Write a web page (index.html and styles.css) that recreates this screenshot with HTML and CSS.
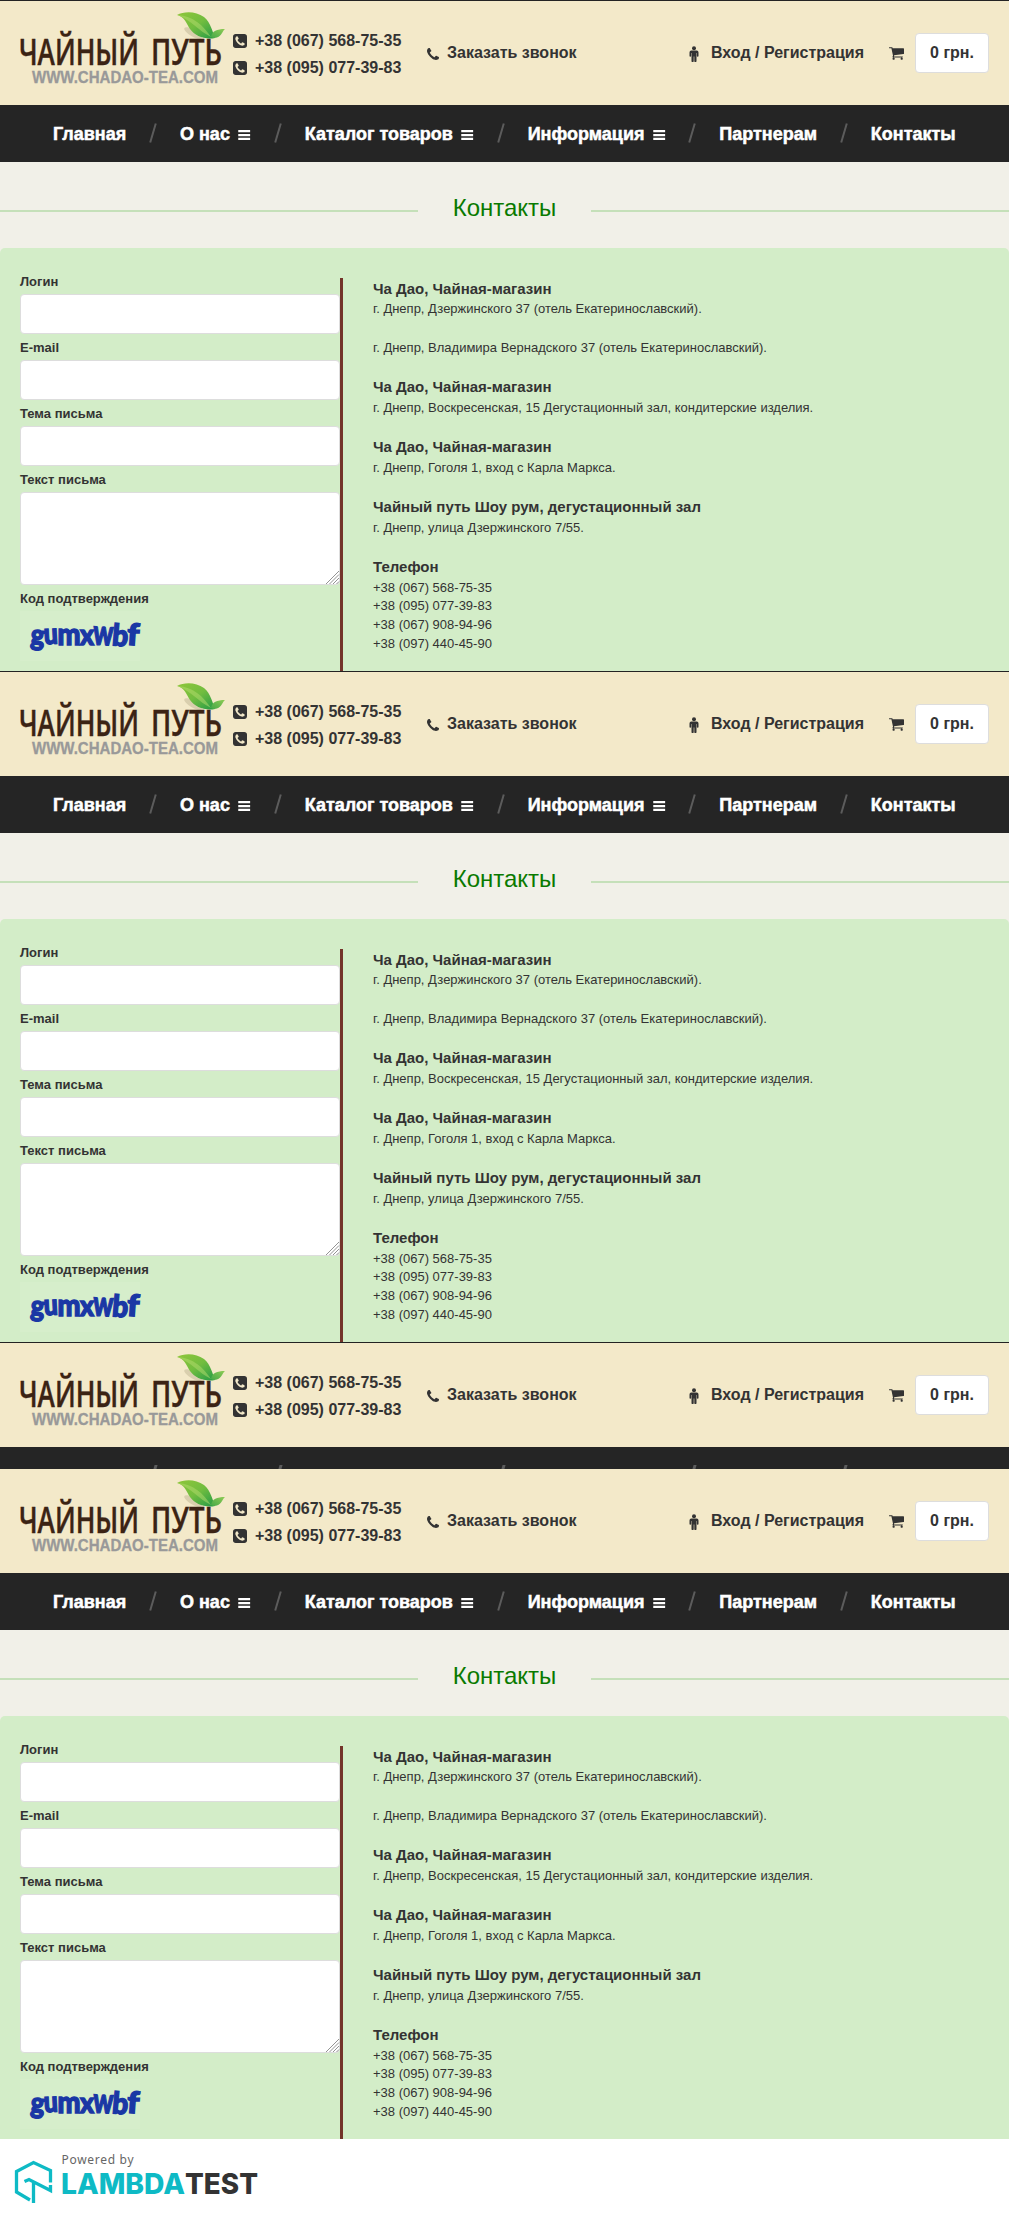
FILE: index.html
```html
<!DOCTYPE html>
<html lang="ru">
<head>
<meta charset="utf-8">
<title>Контакты</title>
<link rel="stylesheet" href="styles.css">
</head>
<body>
<svg class="sprite" width="0" height="0">
  <symbol id="phone-square" viewBox="0 128 1536 1536"><path d="M1280 1193q0-11-2-16-3-8-38.500-29.500t-88.500-49.500l-53-29q-5-3-19-13t-25-15-21-5q-18 0-47 32.500t-57 65.500-44 33q-7 0-16.500-3.500t-15.500-6.500-17-9.500-14-8.500q-99-55-170-126.500t-127-170.500q-2-3-8.500-14t-9.500-17-6.500-15.500-3.500-16.500q0-13 20.500-33.500t45-38.500 45-39.500 20.500-36.500q0-10-5-21t-15-25-13-19q-3-6-15-28.500t-25-45.500-26.500-47.500-25-40.500-16.500-18-16-2q-48 0-101 22-46 21-80 94.500t-34 130.500q0 16 2.500 34t5 30.500 9 33 10 29.500 12.500 33 11 30q60 164 216.500 320.500t320.500 216.500q6 2 30 11t33 12.500 29.500 10 33 9 30.500 5 34 2.500q57 0 130.500-34t94.500-80q22-53 22-101zm256-777v960q0 119-84.500 203.500t-203.500 84.500h-960q-119 0-203.500-84.500t-84.500-203.500v-960q0-119 84.500-203.500t203.500-84.500h960q119 0 203.500 84.500t84.500 203.500z"/></symbol>
  <symbol id="phone" viewBox="192 128 1408 1408"><path d="M1600 1240q0 27-10 70.500t-21 68.500q-21 50-122 106-94 51-186 51-27 0-53-3.500t-57.500-12.500-47-14.500-55.500-20.500-49-18q-98-35-175-83-127-79-264-216t-216-264q-48-77-83-175-3-9-18-49t-20.500-55.500-14.500-47-12.500-57.500-3.500-53q0-92 51-186 56-101 106-122 25-11 68.500-21t70.500-10q14 0 21 3 18 6 53 76 11 19 30 54t35 63.500 31 53.500q3 4 17.500 25t21.500 35.500 7 28.500q0 20-28.500 50t-62 55-62 53-28.500 46q0 9 5 22.500t8.500 20.500 14 24 11.500 19q76 137 174 235t235 174q2 1 19 11.500t24 14 20.500 8.500 22.500 5q18 0 46-28.500t53-62 55-62 50-28.500q14 0 28.500 7t35.500 21.500 25 17.500q25 15 53.500 31t63.500 35 54 30q70 35 76 53 3 7 3 21z"/></symbol>
  <symbol id="cart" viewBox="64 256 1664 1408"><path d="M704 1536q0 52-38 90t-90 38-90-38-38-90 38-90 90-38 90 38 38 90zm896 0q0 52-38 90t-90 38-90-38-38-90 38-90 90-38 90 38 38 90zm128-1088v512q0 24-16.500 42.500t-40.500 21.500l-1044 122q13 60 13 70 0 16-24 64h920q26 0 45 19t19 45-19 45-45 19h-1024q-26 0-45-19t-19-45q0-11 8-31.500t16-36 21.500-40 15.500-29.500l-177-823h-204q-26 0-45-19t-19-45 19-45 45-19h256q16 0 28.500 6.500t19.500 15.500 13 24.500 8 26 5.500 29.500 4.500 26h1201q26 0 45 19t19 45z"/></symbol>
  <symbol id="male" viewBox="0 0 10 16"><circle cx="5" cy="2.200" r="2"/><path d="M2.300 4.600h5.400Q9.500 4.600 9.500 6.400V10a.8.8 0 0 1-1.600 0V7h-.4v8a1 1 0 0 1-2.200 0V10.500h-.6V15a1 1 0 0 1-2.200 0V7h-.4v3a.8.8 0 0 1-1.600 0V6.400Q.5 4.600 2.300 4.600z"/></symbol>
  <symbol id="bars" viewBox="0 0 12 10"><path d="M0 0h12v2.300H0zM0 3.900h12v2.300H0zM0 7.700h12v2.300H0z"/></symbol>
  <symbol id="slash" viewBox="0 0 8 20"><path d="M6.800.5 1.200 19.500" stroke="#5c5c5c" stroke-width="2"/></symbol>
  <linearGradient id="leaf-big" x1="0" y1="0" x2="1" y2="1"><stop offset="0" stop-color="#8fc63a"/><stop offset=".5" stop-color="#72bd3f"/><stop offset="1" stop-color="#239a46"/></linearGradient>
  <linearGradient id="leaf-small" x1="0" y1="1" x2="1" y2="0"><stop offset="0" stop-color="#45a848"/><stop offset="1" stop-color="#8fcc55"/></linearGradient>
</svg>

<template id="header">
  <header class="header">
    <svg class="logo" width="206" height="76" viewBox="20 10 206 76">
      <ellipse cx="193" cy="33" rx="10" ry="3.500" transform="rotate(30 193 33)" fill="#d9cfae"/>
      <path d="M177 15C184 11 196 11 204 17C211 23 212 31 215 38C205 40 195 36 190 29C186 23 185 17 177 15Z" fill="url(#leaf-big)"/>
      <path d="M178 15C193 16 203 25 211 37C199 31 192 21 178 15Z" fill="#b3db6d" opacity=".5"/>
      <path d="M211 37C212 31 217 29 225 29C222 31 222 38 213 38Z" fill="url(#leaf-small)"/>
      <g class="logo-name">
        <text x="19" y="65" textLength="120" lengthAdjust="spacingAndGlyphs">ЧАЙНЫЙ</text>
        <text x="151" y="65" textLength="71" lengthAdjust="spacingAndGlyphs">ПУТЬ</text>
      </g>
      <text class="logo-site" x="32" y="83" textLength="186" lengthAdjust="spacingAndGlyphs">WWW.CHADAO-TEA.COM</text>
    </svg>
    <div class="phones">
      <div class="phone"><svg width="14" height="14"><use href="#phone-square"/></svg>+38 (067) 568-75-35</div>
      <div class="phone"><svg width="14" height="14"><use href="#phone-square"/></svg>+38 (095) 077-39-83</div>
    </div>
    <a class="call"><svg width="12" height="12"><use href="#phone"/></svg>Заказать звонок</a>
    <a class="login"><svg width="10" height="16"><use href="#male"/></svg>Вход / Регистрация</a>
    <svg class="cart-icon" width="15" height="13"><use href="#cart"/></svg>
    <a class="cart">0 грн.</a>
  </header>
</template>

<template id="page">
  <nav class="nav">
    <a>Главная</a><svg class="sep"><use href="#slash"/></svg>
    <a>О нас<svg class="bars"><use href="#bars"/></svg></a><svg class="sep"><use href="#slash"/></svg>
    <a>Каталог товаров<svg class="bars"><use href="#bars"/></svg></a><svg class="sep"><use href="#slash"/></svg>
    <a>Информация<svg class="bars"><use href="#bars"/></svg></a><svg class="sep"><use href="#slash"/></svg>
    <a>Партнерам</a><svg class="sep"><use href="#slash"/></svg>
    <a>Контакты</a>
  </nav>
  <div class="title"><h1>Контакты</h1></div>
  <main class="panel">
    <form class="form">
      <label>Логин</label><input type="text">
      <label>E-mail</label><input type="text">
      <label>Тема письма</label><input type="text">
      <label>Текст письма</label>
      <div class="message">
        <textarea></textarea>
        <svg class="grip" width="13" height="13" viewBox="0 0 13 13"><path d="M0 13 13 0M3.500 13 13 3.500M7 13l6-6M10.500 13l2.500-2.500"/></svg>
      </div>
      <label>Код подтверждения</label>
      <svg class="captcha" width="120" height="50" viewBox="0 0 120 50">
        <text x="10.500" y="34" transform="rotate(5 16 28)" textLength="14" lengthAdjust="spacingAndGlyphs">g</text>
        <text x="24" y="33" transform="rotate(-3 30 28)" textLength="14" lengthAdjust="spacingAndGlyphs" font-size="29">u</text>
        <text x="37.500" y="34" textLength="23" lengthAdjust="spacingAndGlyphs" font-size="30">m</text>
        <text x="60" y="34" textLength="14" lengthAdjust="spacingAndGlyphs" font-size="28">x</text>
        <text x="73" y="34" transform="rotate(3 84 28)" textLength="20" lengthAdjust="spacingAndGlyphs" font-size="35">w</text>
        <text x="92" y="35" transform="rotate(5 100 28)" textLength="16" lengthAdjust="spacingAndGlyphs" font-size="30">b</text>
        <text x="107" y="34" transform="rotate(4 112 28)" textLength="12" lengthAdjust="spacingAndGlyphs" font-size="30">f</text>
      </svg>
    </form>
    <div class="info">
      <h4>Ча Дао, Чайная-магазин</h4>
      <p class="tight">г. Днепр, Дзержинского 37 (отель Екатеринославский).</p>
      <p>г. Днепр, Владимира Вернадского 37 (отель Екатеринославский).</p>
      <h4>Ча Дао, Чайная-магазин</h4>
      <p>г. Днепр, Воскресенская, 15 Дегустационный зал, кондитерские изделия.</p>
      <h4>Ча Дао, Чайная-магазин</h4>
      <p>г. Днепр, Гоголя 1, вход с Карла Маркса.</p>
      <h4>Чайный путь Шоу рум, дегустационный зал</h4>
      <p>г. Днепр, улица Дзержинского 7/55.</p>
      <h4>Телефон</h4>
      <p>+38 (067) 568-75-35<br>+38 (095) 077-39-83<br>+38 (067) 908-94-96<br>+38 (097) 440-45-90</p>
    </div>
  </main>
</template>

<section class="shot" data-parts="header page"></section>
<section class="shot" data-parts="header page"></section>
<section class="shot shot-cut" data-parts="header">
  <div class="nav nav-strip"><i></i><i></i><i></i><i></i><i></i></div>
</section>
<section class="shot shot-last" data-parts="header page"></section>

<footer class="powered">
  <svg width="300" height="79" viewBox="0 0 300 79">
    <g fill="none" stroke="#0ebac5" stroke-width="3.300">
      <path d="M50.500 43.500V31.500L33.500 23.500 16.500 32.500V53L30 61"/>
      <path d="M24.500 42.500 29 40.500 50.500 51.500V46M33.500 42V64"/>
    </g>
    <text class="pw" x="61.500" y="25" textLength="72">Powered by</text>
    <text class="lt" x="61" y="54.500" textLength="124" lengthAdjust="spacingAndGlyphs" fill="#0ebac5">LAMBDA</text>
    <text class="lt" x="185" y="54.500" textLength="73" lengthAdjust="spacingAndGlyphs" fill="#333">TEST</text>
  </svg>
</footer>
<script src="script.js"></script>
</body>
</html>
```
FILE: styles.css
```css
* { box-sizing: border-box; }
body {
  margin: 0;
  background: #fff;
  color: #333;
  font: 13px/18.57px "Liberation Sans", Arial, sans-serif;
}
.sprite { position: absolute; }
svg { display: block; flex: none; fill: currentColor; overflow: visible; }

.shot {
  height: 671px;
  border-top: 1px solid #232323;
  background: #f1f0e8;
}
.shot-cut { height: 127px; }
.shot-last { height: 670px; border-top: 0; }

.header {
  display: flex;
  height: 104px;
  padding-left: 20px;
  background: #f3e9c9;
  font-size: 16px;
  font-weight: bold;
  white-space: nowrap;
}
.logo { margin-top: 9px; }
.logo-name { font-family: "Open Sans", sans-serif; font-size: 36px; font-weight: 600; fill: #3b2314; stroke: #3b2314; stroke-width: .4; }
.logo-site { font-size: 16px; font-weight: bold; fill: #999; stroke: #999; stroke-width: .3; }
.phones { width: 194px; margin: 27px 0 0 7px; }
.phone { display: flex; align-items: center; gap: 8px; height: 27px; }
.phone svg { margin-top: -1px; }
.call, .login { display: flex; align-items: center; height: 105px; }
.call { width: 262px; gap: 8px; }
.login { width: 200px; gap: 12px; }
.cart-icon { margin-top: 46px; }
.cart {
  width: 74px;
  height: 40px;
  margin: 32px 0 0 11px;
  border: 1px solid #ddd;
  border-radius: 4px;
  background: #fff;
  line-height: 38px;
  text-align: center;
}

.nav {
  display: flex;
  align-items: center;
  gap: 22.9px;
  height: 57px;
  padding-left: 53px;
  background: #252525;
  color: #fff;
  font-size: 18px;
  font-weight: bold;
  white-space: nowrap;
}
.nav a { display: flex; align-items: center; padding-top: 2px; -webkit-text-stroke: .5px #fff; }
.bars { width: 12.5px; height: 10px; margin: 1px 0 0 8.5px; }
.sep { width: 8px; height: 20px; margin-top: -2px; }

/* collapsed bar: only the tips of the separators show */
.nav-strip { display: grid; grid-template-columns: 125px 223px 191px 151px 1fr; gap: 0; height: 22px; padding-left: 154px; align-items: end; }
.nav-strip i { width: 3px; height: 4px; background: #5c5c5c; transform: skewX(-16deg); }

.title { display: flex; align-items: center; height: 86px; padding-top: 6px; }
.title::before, .title::after { content: ""; flex: 1; height: 2px; margin-top: 6px; background: #c5e0b9; }
h1 { width: 173px; margin: 0; color: #0a7a00; font-size: 24px; font-weight: normal; line-height: 28px; text-align: center; }

.panel {
  display: flex;
  height: 423px;
  padding: 20px 0 0 20px;
  border-radius: 5px 5px 0 0;
  background: #d3edc8;
}
.form { display: flex; flex-direction: column; width: 320px; }
label { height: 26px; font-weight: bold; line-height: 27px; }
input, textarea { display: block; width: 320px; height: 40px; margin: 0; border: 1px solid #ddd; border-radius: 4px; background: #fff; }
.message { position: relative; height: 93px; }
textarea { height: 93px; resize: none; }
.grip { position: absolute; right: 1px; bottom: 1px; fill: none; stroke: #777; stroke-width: .8; }
.captcha { background: #d6eecb; font-size: 29px; }
.captcha text { font-family: Lato, sans-serif; font-weight: 900; fill: #1a37a5; stroke: #1a37a5; stroke-width: 1.4; }

.info { flex: 1; margin-top: 10px; padding-left: 30px; border-left: 3px solid #73342a; }
h4 { margin: 0 0 2px; font-size: 15px; line-height: 21px; }
p { margin: 0 0 18.43px; }
.info .tight { margin-top: -1px; margin-bottom: 20.43px; }
.info .tight + p { margin-bottom: 18.43px; }

.powered { height: 79px; background: #fff; }
.pw { font: 12px "Noto Sans", sans-serif; fill: #666; }
.lt { font: 800 28px Inter, sans-serif; }
```
FILE: script.js
```js
// Each section is built from the shared header and page templates.
document.querySelectorAll(".shot").forEach((section) => {
  section.dataset.parts.split(" ").reverse().forEach((id) => {
    section.prepend(document.getElementById(id).content.cloneNode(true));
  });
});
```
